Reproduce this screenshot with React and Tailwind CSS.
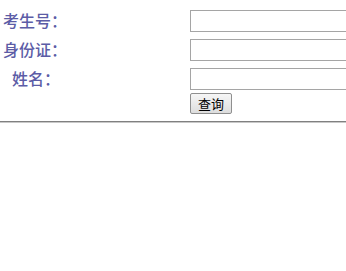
import React, { useState } from 'react';

const labelFont = { fontFamily: '"Noto Sans CJK SC", "Noto Sans", sans-serif' };

const Field = ({ label, value, onChange, indent }) => (
  <div className="flex items-center h-[22px]">
    <div
      className={`w-[190px] shrink-0 pb-[3px] text-[16px] font-medium leading-none text-[#5c5ca6] ${indent ? 'pl-[12px]' : 'pl-[3px]'}`}
      style={labelFont}
    >
      {label}
    </div>
    <input
      type="text"
      value={value}
      onChange={(e) => onChange(e.target.value)}
      className="h-[22px] w-[170px] shrink-0 border border-[#a5a5a5] bg-white px-1 text-[13px] outline-none"
    />
  </div>
);

const App = () => {
  const [examNo, setExamNo] = useState('');
  const [idCard, setIdCard] = useState('');
  const [name, setName] = useState('');

  return (
    <div className="w-[346px] h-[271px] overflow-hidden bg-white">
      {/* Query form */}
      <div className="flex flex-col gap-[7px] pt-[10px]">
        <Field label="考生号：" value={examNo} onChange={setExamNo} />
        <Field label="身份证：" value={idCard} onChange={setIdCard} />
        <Field label="姓名：" value={name} onChange={setName} indent />
      </div>
      <div className="flex pl-[190px] pt-[3px]">
        <button
          type="button"
          className="flex h-[21px] w-[42px] items-center justify-center rounded-[2px] border border-[#8f8f8f] bg-gradient-to-b from-[#f6f6f6] to-[#dddddd] text-[13px] font-normal leading-none text-black"
          style={labelFont}
        >
          查询
        </button>
      </div>
      <div className="mt-[7px] h-[2px] border-t border-[#808080] border-b border-b-[#c8c8c8]" />
    </div>
  );
};

export default App;
